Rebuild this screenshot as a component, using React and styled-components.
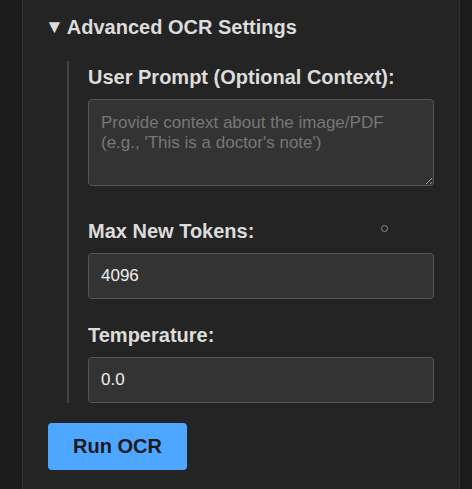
import React from 'react';
import styled, { createGlobalStyle } from 'styled-components';

const GlobalStyle = createGlobalStyle`
  html, body {
    margin: 0;
    padding: 0;
    background-color: #1c1c1c;
    font-family: "Liberation Sans", Arial, sans-serif;
  }
`;

const Panel = styled.div`
  margin-left: 22px;
  width: 438px;
  height: 489px;
  box-sizing: border-box;
  background-color: #242424;
  border-left: 1px solid #2f2f2f;
  border-right: 1px solid #2f2f2f;
  padding: 16px 25px 0 25px;
`;

const Summary = styled.div`
  display: flex;
  align-items: center;
  color: #dcdcdc;
  font-size: 20px;
  font-weight: bold;
  line-height: 22px;
`;

const Marker = styled.span`
  font-size: 19px;
  margin: 0 3px 0 -3px;
  color: #dcdcdc;
`;

const Nested = styled.div`
  margin: 23px 0 0 19px;
  padding: 5px 0 0 19px;
  border-left: 2px solid #444;
`;

const Group = styled.div`
  position: relative;
  margin-bottom: ${(props) => props.$gap}px;
`;

const Label = styled.label`
  display: block;
  color: #dcdcdc;
  font-size: 20px;
  font-weight: bold;
  line-height: 22px;
  margin: 0 0 11px 0;
`;

const TextArea = styled.textarea`
  display: block;
  width: 100%;
  height: 87px;
  box-sizing: border-box;
  background-color: #333;
  border: 1px solid #555;
  border-radius: 4px;
  padding: 13px 12px;
  color: #eee;
  font-family: "Liberation Sans", Arial, sans-serif;
  font-size: 17px;
  line-height: 20px;
  resize: vertical;
  outline: none;

  &::placeholder {
    color: #777;
  }
`;

const Input = styled.input`
  display: block;
  width: 100%;
  height: 46px;
  box-sizing: border-box;
  background-color: #333;
  border: 1px solid #555;
  border-radius: 4px;
  padding: 0 12px;
  color: #eee;
  font-family: "Liberation Sans", Arial, sans-serif;
  font-size: 17px;
  outline: none;
`;

const Dot = styled.span`
  position: absolute;
  left: 293px;
  top: 5px;
  width: 5px;
  height: 5px;
  border-radius: 50%;
  border: 1.5px solid #8a8a8a;
`;

const RunButton = styled.button`
  margin-top: 20px;
  width: 139px;
  height: 47px;
  background-color: #4da6ff;
  border: none;
  border-radius: 4px;
  color: #1a1a1a;
  font-family: "Liberation Sans", Arial, sans-serif;
  font-size: 20px;
  font-weight: bold;
`;

export default function App() {
  return (
    <>
      <GlobalStyle />
      <Panel>
        <Summary>
          <Marker>▼</Marker>
          Advanced OCR Settings
        </Summary>
        <Nested>
          <Group $gap={34}>
            <Label>User Prompt (Optional Context):</Label>
            <TextArea placeholder="Provide context about the image/PDF (e.g., 'This is a doctor's note')" />
          </Group>
          <Group $gap={25}>
            <Label>Max New Tokens:</Label>
            <Dot />
            <Input defaultValue="4096" />
          </Group>
          <Group $gap={0}>
            <Label>Temperature:</Label>
            <Input defaultValue="0.0" />
          </Group>
        </Nested>
        <RunButton type="button">Run OCR</RunButton>
      </Panel>
    </>
  );
}
